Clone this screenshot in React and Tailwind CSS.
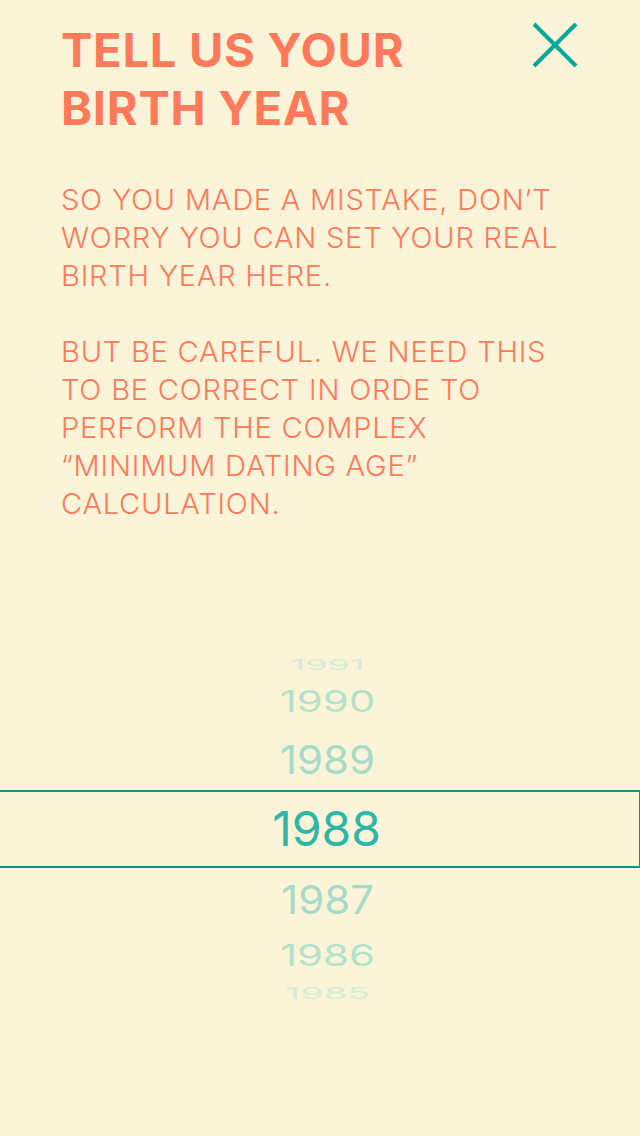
import React from 'react';

const above = [
  { year: 1991, row: 'h-[18px]', text: 'text-[36px] scale-y-[0.4] text-[#d6ecd4]' },
  { year: 1990, row: 'h-[56px]', text: 'text-[42px] scale-y-[0.7] text-[#b4e1cb]' },
  { year: 1989, row: 'h-[60px]', text: 'text-[42px] scale-y-[0.95] text-[#a6dcc7]' },
];

const below = [
  { year: 1987, row: 'h-[63px]', text: 'text-[42px] scale-y-[0.95] text-[#a6dcc7]' },
  { year: 1986, row: 'h-[50px]', text: 'text-[42px] scale-y-[0.7] text-[#b4e1cb]' },
  { year: 1985, row: 'h-[24px]', text: 'text-[38px] scale-y-[0.4] text-[#d6ecd4]' },
];

function YearRow({ year, row, text }) {
  return (
    <div className={`${row} flex items-center justify-center pl-[15px]`}>
      <span className={`${text} leading-none font-normal`}>{year}</span>
    </div>
  );
}

export default function App() {
  return (
    <div
      className="min-h-[1136px] w-full bg-[#fbf4d9] text-[#ff7a5b]"
      style={{ fontFamily: 'Inter, Roboto, "Noto Sans", sans-serif' }}
    >
      {/* Header */}
      <div className="flex items-start justify-between pl-[61px] pr-[62px] pt-[21px]">
        <h1 className="text-[47px] font-bold leading-[58px] tracking-[0.75px] whitespace-nowrap">
          TELL US YOUR
          <br />
          BIRTH YEAR
        </h1>
        <button className="mt-[1px] text-[#05a99c]" aria-label="Close">
          <svg width="46" height="46" viewBox="0 0 46 46">
            <line x1="2" y1="2" x2="44" y2="44" stroke="currentColor" strokeWidth="4" />
            <line x1="44" y1="2" x2="2" y2="44" stroke="currentColor" strokeWidth="4" />
          </svg>
        </button>
      </div>

      {/* Copy */}
      <div className="mt-[44px] pl-[61px] text-[29px] font-light leading-[38px] tracking-[0.8px] whitespace-nowrap">
        <p>
          SO YOU MADE A MISTAKE, DON’T
          <br />
          WORRY YOU CAN SET YOUR REAL
          <br />
          BIRTH YEAR HERE.
        </p>
        <p className="mt-[38px]">
          BUT BE CAREFUL. WE NEED THIS
          <br />
          TO BE CORRECT IN ORDE TO
          <br />
          PERFORM THE COMPLEX
          <br />
          “MINIMUM DATING AGE”
          <br />
          CALCULATION.
        </p>
      </div>

      {/* Year picker */}
      <div className="mt-[133px] flex flex-col">
        {above.map((y) => (
          <YearRow key={y.year} {...y} />
        ))}
        <div className="-ml-px flex h-[78px] items-center justify-center border-y-2 border-r border-[#0b978b] pl-[15px]">
          <span className="text-[48px] font-normal leading-none text-[#2db7a6]">1988</span>
        </div>
        {below.map((y) => (
          <YearRow key={y.year} {...y} />
        ))}
      </div>
    </div>
  );
}
